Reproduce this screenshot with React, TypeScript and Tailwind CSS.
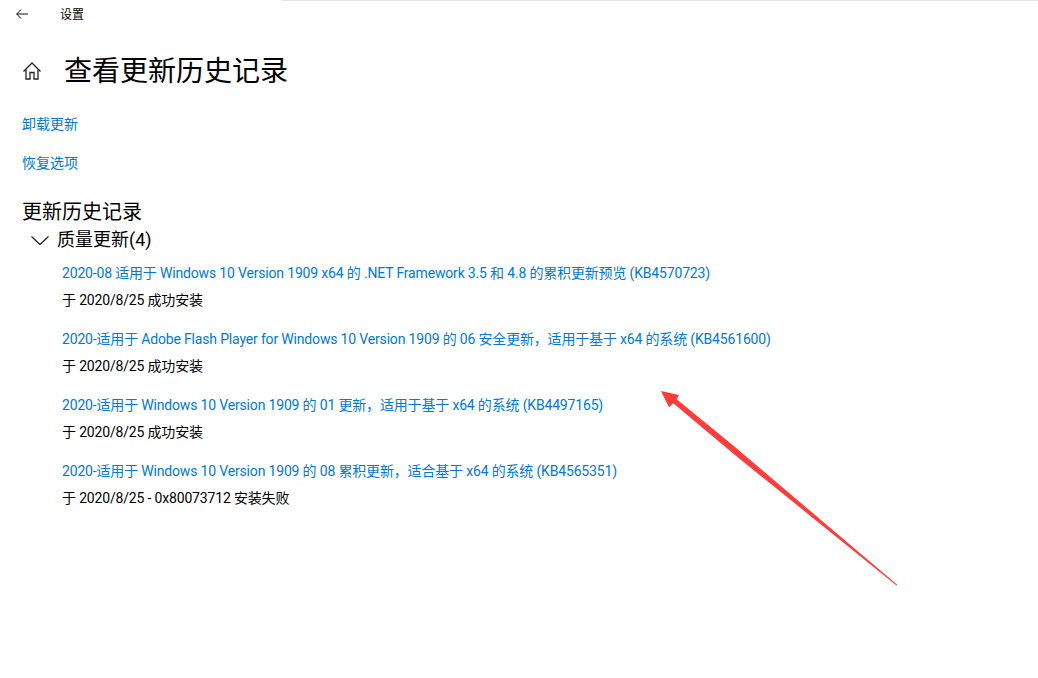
import React from 'react';

const updates = [
  { title: '2020-08 适用于 Windows 10 Version 1909 x64 的 .NET Framework 3.5 和 4.8 的累积更新预览 (KB4570723)', status: '于 2020/8/25 成功安装' },
  { title: '2020-适用于 Adobe Flash Player for Windows 10 Version 1909 的 06 安全更新，适用于基于 x64 的系统 (KB4561600)', status: '于 2020/8/25 成功安装' },
  { title: '2020-适用于 Windows 10 Version 1909 的 01 更新，适用于基于 x64 的系统 (KB4497165)', status: '于 2020/8/25 成功安装' },
  { title: '2020-适用于 Windows 10 Version 1909 的 08 累积更新，适合基于 x64 的系统 (KB4565351)', status: '于 2020/8/25 - 0x80073712 安装失败' },
];

const App = () => {
  return (
    <div className="relative h-[678px] w-[1038px] overflow-hidden bg-white font-['Roboto','Noto_Sans_CJK_SC',sans-serif] text-black">
      <div className="absolute left-[282px] right-0 top-0 h-px bg-[#e3e3e3]" />

      <div className="flex h-[30px] items-center pl-[16px]">
        <svg width="12" height="10" viewBox="0 0 12 10" fill="none" stroke="#111" strokeWidth="1" className="mb-[2px]">
          <path d="M5 .5.700 5 5 9.500M.700 5H12" />
        </svg>
        <span className="ml-[32px] text-xs">设置</span>
      </div>

      <div className="mt-[21px] flex h-[42px] items-center pl-[23px]">
        <svg width="18" height="18" viewBox="0 0 18 18" fill="none" stroke="#222" strokeWidth="1.3" className="mb-[3px]">
          <path d="M.500 9.500 9 1l8.500 8.500" />
          <path d="M3 7.500V17h4v-6.500h4V17h4V7.500" />
        </svg>
        <h1 className="ml-[23px] text-[28px] font-normal leading-none">查看更新历史记录</h1>
      </div>

      <div className="mt-[21px] flex flex-col gap-[19px] pl-[22px] text-sm leading-5 text-[#0078d7]">
        <a>卸载更新</a>
        <a>恢复选项</a>
      </div>

      <h2 className="mt-[25px] pl-[22px] text-xl font-normal leading-7">更新历史记录</h2>

      <div className="flex h-[28px] items-center pl-[31px]">
        <svg width="18" height="9" viewBox="0 0 18 9" fill="none" stroke="#111" strokeWidth="1.1">
          <path d="M.500.500 9 8.500 17.500.500" />
        </svg>
        <span className="ml-[8px] text-lg leading-none">质量更新(4)</span>
      </div>

      <div className="mt-[9px] flex flex-col gap-[19px] pl-[62px] text-sm leading-5 tracking-[-0.17px]">
        {updates.map((update, index) => (
          <div key={index} className="flex flex-col gap-[7px]">
            <a className="text-[#0078d7]">{update.title}</a>
            <span>{update.status}</span>
          </div>
        ))}
      </div>

      <svg className="absolute left-0 top-0" width="1038" height="678" fill="#ff3b3b">
        <polygon points="661,391 679,395 676.700,399.300 735,447 897.500,585 896.500,585.500 735,455 673.300,403.300 669,407.300" />
      </svg>
    </div>
  );
};

export default App;
